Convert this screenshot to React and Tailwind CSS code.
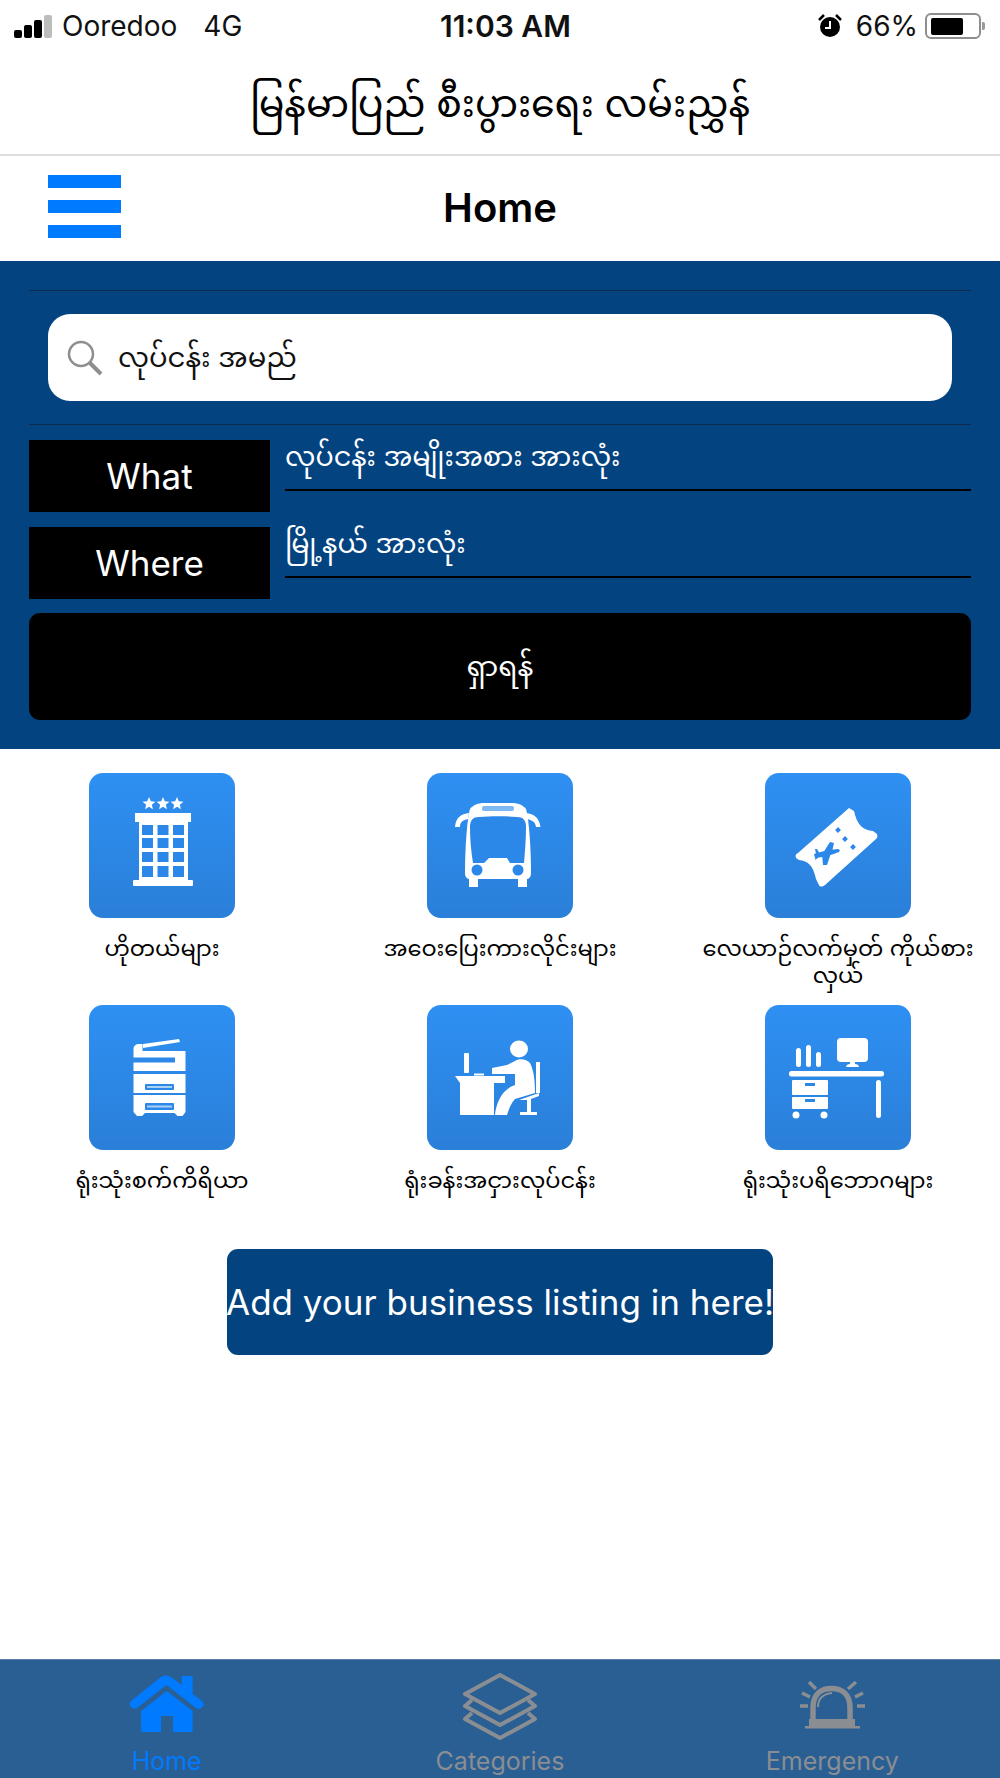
const SANS = { fontFamily: 'Inter, "Liberation Sans", "Noto Sans", "Noto Sans Myanmar", sans-serif' };

// icons are drawn on a 146x145 tile, same size as the reference tiles
const BLUE = "#2c88e8";

function Hotel() {
  const cols = [53, 68.5, 84];
  const rows = [52, 65, 79, 93];
  return (
    <>
      <path fill="#fff" d="M60 24l1.800 4.300 4.600.4-3.500 3 1 4.500-3.900-2.400-3.900 2.400 1-4.500-3.500-3 4.600-.4zM74 24l1.800 4.300 4.600.4-3.500 3 1 4.500-3.900-2.400-3.900 2.400 1-4.500-3.500-3 4.600-.4zM88 24l1.800 4.300 4.600.4-3.500 3 1 4.500-3.900-2.400-3.900 2.400 1-4.500-3.500-3 4.600-.4z" />
      <rect x="46" y="40" width="56" height="9" fill="#fff" />
      <rect x="50" y="49" width="49" height="60" fill="#fff" />
      <rect x="44" y="107" width="60" height="6" rx="1" fill="#fff" />
      {rows.map((y) => cols.map((x) => <rect key={`${x}-${y}`} x={x} y={y} width="11" height={y === 93 ? 11 : 10} fill={BLUE} />))}
    </>
  );
}

function Bus() {
  return (
    <>
      <path fill="#fff" d="M43 36c3-4 8-6 14-6h28c6 0 11 2 14 6 3 10 5 40 5 64 0 4-2 6-5 6H43c-3 0-5-2-5-6 0-24 2-54 5-64z" />
      <rect x="42" y="104" width="9" height="10" fill="#fff" />
      <rect x="91" y="104" width="9" height="10" fill="#fff" />
      <path fill={BLUE} d="M43 54c0-7 3-10 9-10 12-1 26-1 38 0 6 0 9 3 9 10 0 12-1 24-2 36H83l-3-5H62l-5 5H46c-2-12-3-24-3-36z" />
      <rect x="55" y="33" width="32" height="5" rx="2" fill="#7fb9f2" />
      <circle cx="50" cy="97" r="5.500" fill={BLUE} />
      <circle cx="91" cy="97" r="5.500" fill={BLUE} />
      <path fill="#fff" d="M42 40c-8 1-13 4-14 14h5c0-5 3-7 8-8zM99 40c8 1 13 4 14.500 14h-4.500c-.5-5-4-7-9-8z" />
    </>
  );
}

function Ticket() {
  return (
    <>
      <path fill="#fff" d="M84 35l5 3c3 14 9 19 19 20l4 3c1 3 0 4-1 5L60 112c-3 2-5 2-6 0l-3-6c-3-14-8-18-17-19l-3-2c-1-3 0-4 2-5z" />
      <path fill={BLUE} d="M49 81q11-4 24-5 3 1 1 3-12 5-24 6zM65 69l4 1-2 9-9 1zM57 81l9-1-4 12-4 0zM50 76l2 0 3 5-2 4-3 2 1-6z" />
      <path fill="none" stroke={BLUE} strokeWidth="4" d="M71.500 58.500l3-3M78.500 67.500l3-3M86.500 75.500l3-3" />
    </>
  );
}

function Copier() {
  return (
    <>
      <path fill="#fff" d="M54 39l36-5 1 3-37 6z" />
      <path fill="#fff" d="M44.500 44c0-3 2-5 6-5h3v7h43v20h-52V57.500H86v-5H44.500z" />
      <rect x="44.500" y="69" width="52" height="19" fill="#fff" />
      <path fill="#fff" d="M44.500 90h52v17l-3 4h-5l-3-3H56l-3 3h-5l-3.500-4z" />
      <rect x="56" y="79" width="29" height="6" rx="1" fill={BLUE} />
      <rect x="58" y="81" width="25" height="2" fill="#a9d0f7" />
      <rect x="56" y="98" width="29" height="7" rx="1" fill={BLUE} />
      <rect x="58" y="100.500" width="25" height="2" fill="#a9d0f7" />
    </>
  );
}

function Worker() {
  return (
    <>
      <ellipse cx="92" cy="44" rx="9" ry="8.500" fill="#fff" />
      <rect x="37" y="48" width="5" height="20" rx="1" fill="#fff" />
      <rect x="47" y="68.500" width="10" height="2" fill="#fff" />
      <path fill="#fff" d="M28 71h50v7H33z" />
      <rect x="33" y="78" width="34" height="32" fill="#fff" />
      <path fill="#fff" d="M88 56c4-3 12-2 15 2 4 8 5 18 5 30l-20 6c-4 4-6 10-8 16H68c1-12 7-26 20-30V69H65v-6l15-3z" />
      <rect x="109" y="57" width="4" height="31" fill="#fff" />
      <path fill="#fff" d="M92 95l20-7v3l-8 3v13h6v3H93v-3h7V95z" />
    </>
  );
}

function Desk() {
  return (
    <>
      <rect x="72" y="33" width="31" height="24" rx="4" fill="#fff" />
      <path fill="#fff" d="M85 57h5v2c2 0 4 1 4 3H81c0-2 2-3 4-3z" />
      <rect x="31" y="43" width="5" height="19" rx="2.500" fill="#fff" />
      <rect x="41" y="40" width="5" height="22" rx="2.500" fill="#fff" />
      <rect x="51" y="47" width="5" height="15" rx="2.500" fill="#fff" />
      <rect x="24" y="66" width="95" height="5.500" rx="2.500" fill="#fff" />
      <rect x="27" y="75" width="36" height="15" rx="1" fill="#fff" />
      <rect x="27" y="92" width="36" height="12" rx="1" fill="#fff" />
      <rect x="40" y="78" width="10" height="3" fill={BLUE} />
      <rect x="40" y="94" width="10" height="3" fill={BLUE} />
      <circle cx="31" cy="110" r="3.500" fill="#fff" />
      <circle cx="59" cy="110" r="3.500" fill="#fff" />
      <rect x="111" y="75" width="5" height="38" rx="2.500" fill="#fff" />
    </>
  );
}

const categories = [
  { label: "ဟိုတယ်များ", Icon: Hotel },
  { label: "အဝေးပြေးကားလိုင်းများ", Icon: Bus },
  { label: "လေယာဉ်လက်မှတ် ကိုယ်စား\nလှယ်", Icon: Ticket },
  { label: "ရုံးသုံးစက်ကိရိယာ", Icon: Copier },
  { label: "ရုံးခန်းအငှားလုပ်ငန်း", Icon: Worker },
  { label: "ရုံးသုံးပရိဘောဂများ", Icon: Desk },
];

function Tile({ label, Icon }) {
  return (
    <div className="flex flex-col items-center">
      <div className="h-[145px] w-[146px] rounded-[14px] bg-gradient-to-b from-[#2e90f3] to-[#2a7fd8]">
        <svg width="146" height="145" viewBox="0 0 146 145">
          <Icon />
        </svg>
      </div>
      <div className="mt-[16px] whitespace-pre-line text-center text-[22.500px] leading-[27px] text-black">{label}</div>
    </div>
  );
}

function StatusBar() {
  return (
    <div className="relative flex h-[52px] items-center text-[28px] text-[#111]">
      <div className="flex items-end gap-[2px] pl-[14px]">
        <span className="h-[8px] w-[8px] rounded-[2px] bg-black" />
        <span className="h-[13px] w-[8px] rounded-[2px] bg-black" />
        <span className="h-[18px] w-[8px] rounded-[2px] bg-black" />
        <span className="h-[23px] w-[8px] rounded-[2px] bg-[#bdbdbd]" />
      </div>
      <span className="ml-[10px] leading-none">Ooredoo</span>
      <span className="ml-[26px] leading-none">4G</span>
      <span className="absolute left-[440px] text-[30px] font-semibold leading-none">11:03 AM</span>
      <div className="ml-auto flex items-center pr-[19px]">
        <svg width="24" height="24" viewBox="0 0 24 24">
          <circle cx="12" cy="13" r="10" fill="#000" />
          <path d="M12 7v7h-5" fill="none" stroke="#fff" strokeWidth="2" />
          <path d="M1 6l5-5M23 6l-5-5" stroke="#000" strokeWidth="2.500" />
        </svg>
        <span className="ml-[14px] leading-none">66%</span>
        <div className="relative ml-[7px] flex h-[26px] w-[56px] items-center rounded-[6px] border-2 border-[#8e8e8e] pl-[4px]">
          <span className="h-[17px] w-[32px] rounded-[2px] bg-black" />
          <span className="absolute -right-[6px] h-[8px] w-[3px] rounded-r-[2px] bg-[#9a9a9a]" />
        </div>
      </div>
    </div>
  );
}

function TabBar() {
  return (
    <div className="mt-auto grid h-[119px] shrink-0 grid-cols-3 overflow-hidden border-t border-[#5a7fa8] bg-[#2a5f94] text-[25px] leading-none text-[#8a8d91]">
      <div className="flex flex-col items-center">
        <svg className="mt-[14px] h-[60px]" width="76" height="60" viewBox="18 9 76 60" fill="#007aff">
          <path d="M50 12q5-3 10 0l10.700 8v-8q0-1 1.300-1h8.500q1.200 0 1.200 1v17l9.300 7q3 3 .5 6-2.500 3-6.500 1L55.500 20 26 43q-4 2-6-1-3-3 0-6z" />
          <path d="M55.700 26l26 20v19q0 2-1.700 2H62V51H50v16H32q-2 0-2-2V46z" />
        </svg>
        <span className="mt-[15px] text-[#007aff]">Home</span>
      </div>
      <div className="flex flex-col items-center">
        <svg className="mt-[13px] h-[68px]" width="76" height="68" viewBox="0 0 76 68" fill="none" stroke="#8a8d91" strokeWidth="4" strokeLinejoin="round">
          <path d="M38 2l35 19-35 19L3 21z" />
          <path d="M10 27l-7 6 35 19 35-19-7-6" />
          <path d="M10 40l-7 6 35 19 35-19-7-6" />
        </svg>
        <span className="mt-[8px]">Categories</span>
      </div>
      <div className="flex flex-col items-center pr-[2px]">
        <svg className="mt-[20px] h-[52px]" width="66" height="52" viewBox="19 15 66 52" fill="none" stroke="#8a8d91">
          <path strokeWidth="5.500" d="M33 55V43c0-14 8-19.500 18.500-19.500S70 29 70 43v12" />
          <path strokeWidth="2" d="M38 42c0-8 5-13 14-14" />
          <path fill="#8a8d91" stroke="none" d="M29 54h46v7h5v2.500H25V61h4z" />
          <path strokeWidth="3.500" d="M20 41h8M77 41h8M22 28l8 4M83 28l-8 4M29 17l7 7M76 17l-8 7" />
        </svg>
        <span className="mt-[17px]">Emergency</span>
      </div>
    </div>
  );
}

export default function App() {
  return (
    <div className="flex h-[1778px] flex-col overflow-hidden bg-white" style={SANS}>
      <StatusBar />

      {/* TITLE */}
      <div className="flex h-[104px] items-center justify-center border-b-2 border-[#dedede] text-[38px] text-black">
        မြန်မာပြည် စီးပွားရေး လမ်းညွှန်
      </div>

      {/* NAV */}
      <div className="relative flex h-[105px] items-center justify-center pb-[2px]">
        <div className="absolute left-[48px] top-[19px] flex flex-col gap-[12px]">
          <span className="h-[13px] w-[73px] bg-[#007aff]" />
          <span className="h-[13px] w-[73px] bg-[#007aff]" />
          <span className="h-[13px] w-[73px] bg-[#007aff]" />
        </div>
        <h1 className="text-[40px] font-semibold text-black">Home</h1>
      </div>

      {/* SEARCH PANEL */}
      <div className="flex h-[488px] flex-col bg-[#03437f] px-[29px] pt-[29px] text-white">
        <div className="border-y border-[#0e2a4d] px-[19px] py-[23px]">
          <div className="flex h-[87px] items-center rounded-[22px] bg-white pl-[19px] text-[27.500px] text-[#111]">
            <svg width="36" height="36" viewBox="0 0 36 36" fill="none" stroke="#8e8e8e">
              <circle cx="14" cy="14" r="12" strokeWidth="2.500" />
              <path d="M23 23l11 11" strokeWidth="4" />
            </svg>
            <span className="ml-[15px]">လုပ်ငန်း အမည်</span>
          </div>
        </div>
        <div className="mt-[15px] flex gap-[15px]">
          <div className="flex h-[72px] w-[241px] items-center justify-center bg-black text-[35px]">What</div>
          <div className="flex h-[51px] flex-1 items-center border-b-2 border-black pb-[14px] text-[27px]">လုပ်ငန်း အမျိုးအစား အားလုံး</div>
        </div>
        <div className="mt-[15px] flex gap-[15px]">
          <div className="flex h-[72px] w-[241px] items-center justify-center bg-black text-[35px]">Where</div>
          <div className="flex h-[51px] flex-1 items-center border-b-2 border-black pb-[14px] text-[27px]">မြို့နယ် အားလုံး</div>
        </div>
        <button className="mt-[14px] flex h-[107px] items-center justify-center rounded-[11px] bg-black pb-[2px] text-[28px] text-white">ရှာရန်</button>
      </div>

      {/* CATEGORIES */}
      <div className="mt-[24px] grid grid-cols-3 gap-x-4 px-[1px]">
        {categories.map((c, i) => (
          <div key={c.label} className={i < 3 ? "h-[232px]" : ""}>
            <Tile label={c.label} Icon={c.Icon} />
          </div>
        ))}
      </div>

      <button className="mx-auto mt-[56px] flex h-[106px] w-[546px] items-center justify-center whitespace-nowrap rounded-[11px] bg-[#03437f] text-[35px] text-white">
        Add your business listing in here!
      </button>

      <TabBar />
    </div>
  );
}
